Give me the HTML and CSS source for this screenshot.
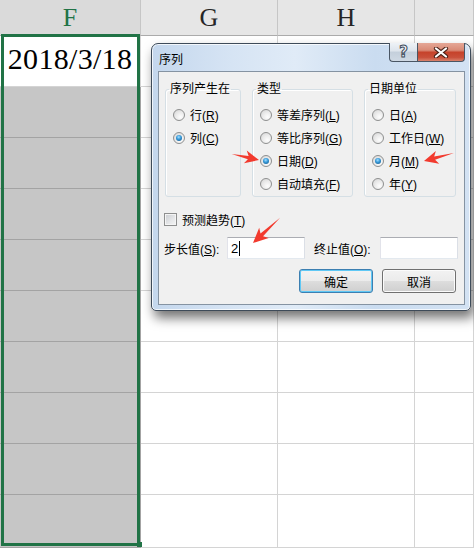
FILE: index.html
```html
<!DOCTYPE html>
<html lang="zh-CN">
<head>
<meta charset="utf-8">
<title>序列</title>
<link rel="stylesheet" href="styles.css">
</head>
<body>
<div class="sheet">
  <div class="hd hd-sel">F</div><div class="hd">G</div><div class="hd">H</div><div class="hd"></div>
  <div class="c c-date">2018/3/18</div><div class="c"></div><div class="c"></div><div class="c"></div>
  <div class="c c-g"></div><div class="c"></div><div class="c"></div><div class="c"></div>
  <div class="c c-g"></div><div class="c"></div><div class="c"></div><div class="c"></div>
  <div class="c c-g"></div><div class="c"></div><div class="c"></div><div class="c"></div>
  <div class="c c-g"></div><div class="c"></div><div class="c"></div><div class="c"></div>
  <div class="c c-g"></div><div class="c"></div><div class="c"></div><div class="c"></div>
  <div class="c c-g"></div><div class="c"></div><div class="c"></div><div class="c"></div>
  <div class="c c-g"></div><div class="c"></div><div class="c"></div><div class="c"></div>
  <div class="c c-g"></div><div class="c"></div><div class="c"></div><div class="c"></div>
  <div class="c c-g"></div><div class="c"></div><div class="c"></div><div class="c"></div>
</div>
<div class="selbox"><span class="handle"></span></div>

<div class="dlg">
  <div class="tbar">
    <span class="ttl">序列</span>
    <div class="tbtns">
      <span class="wb wb-help">?</span>
      <span class="wb wb-close"><svg width="16" height="11" viewBox="0 0 16 11"><path d="M3 1.5 L13 9.5 M13 1.5 L3 9.5" stroke="#4a2118" stroke-width="4.2" stroke-linecap="round"/><path d="M3 1.5 L13 9.5 M13 1.5 L3 9.5" stroke="#ffffff" stroke-width="2.2" stroke-linecap="round"/></svg></span>
    </div>
  </div>
  <div class="client">
    <div class="groups">
      <fieldset class="grp grp1">
        <legend>序列产生在</legend>
        <div class="opt"><span class="radio"></span><span>行(<u>R</u>)</span></div>
        <div class="opt"><span class="radio on"></span><span>列(<u>C</u>)</span></div>
      </fieldset>
      <fieldset class="grp grp2">
        <legend>类型</legend>
        <div class="opt"><span class="radio"></span><span>等差序列(<u>L</u>)</span></div>
        <div class="opt"><span class="radio"></span><span>等比序列(<u>G</u>)</span></div>
        <div class="opt"><span class="radio on"></span><span>日期(<u>D</u>)</span></div>
        <div class="opt"><span class="radio"></span><span>自动填充(<u>F</u>)</span></div>
      </fieldset>
      <fieldset class="grp grp3">
        <legend>日期单位</legend>
        <div class="opt"><span class="radio"></span><span>日(<u>A</u>)</span></div>
        <div class="opt"><span class="radio"></span><span>工作日(<u>W</u>)</span></div>
        <div class="opt"><span class="radio on"></span><span>月(<u>M</u>)</span></div>
        <div class="opt"><span class="radio"></span><span>年(<u>Y</u>)</span></div>
      </fieldset>
    </div>
    <div class="trend"><span class="chk"></span><span>预测趋势(<u>T</u>)</span></div>
    <div class="step">
      <span class="lbl lbl1">步长值(<u>S</u>):</span>
      <div class="tb"><span>2</span><span class="caret"></span></div>
      <span class="lbl lbl2">终止值(<u>O</u>):</span>
      <div class="tb"></div>
    </div>
    <div class="btns">
      <div class="btn btn-def">确定</div>
      <div class="btn">取消</div>
    </div>
  </div>
</div>

<svg class="arrows" width="474" height="548" viewBox="0 0 474 548">
  <path class="arr" d="M-28 0 L-11 -1.7 L-14 -6.5 L0 0 L-14 6.5 L-11 1.7 Z" transform="translate(259 160) rotate(12.5)"/>
  <path class="arr" d="M-31 0 L-11 -1.7 L-14 -6.5 L0 0 L-14 6.5 L-11 1.7 Z" transform="translate(424 161) rotate(165)"/>
  <path class="arr" d="M-37 0 L-12 -1.9 L-15 -7 L0 0 L-15 7 L-12 1.9 Z" transform="translate(253 243) rotate(137)"/>
</svg>
</body>
</html>
```

FILE: styles.css
```css
html, body {
  margin: 0;
  padding: 0;
}
body {
  width: 474px;
  height: 548px;
  overflow: hidden;
  background: #ffffff;
  position: relative;
  font-family: "Liberation Sans", "Noto Sans CJK SC", sans-serif;
}

/* ---------- spreadsheet ---------- */
.sheet {
  display: grid;
  grid-template-columns: 141px 137px 137px 59px;
  grid-template-rows: 36px repeat(9, 51px) 53px;
}
.hd {
  box-sizing: border-box;
  background: #e6e6e6;
  border-right: 1px solid #c6c6c6;
  border-bottom: 1px solid #ababab;
  display: flex;
  align-items: center;
  justify-content: center;
  font-family: "Liberation Serif", serif;
  font-size: 26px;
  color: #262626;
  padding-top: 1px;
}
.hd-sel {
  background: #dadada;
  color: #217346;
}
.c {
  box-sizing: border-box;
  border-right: 1px solid #d4d4d4;
  border-bottom: 1px solid #d4d4d4;
  background: #ffffff;
}
.c-g {
  background: #c6c6c6;
  border-bottom-color: #a3a3a3;
  border-right-color: #a3a3a3;
}
.c-date {
  display: flex;
  align-items: flex-end;
  justify-content: center;
  font-family: "Liberation Serif", serif;
  font-size: 30px;
  letter-spacing: 0.3px;
  line-height: 1;
  padding-bottom: 12px;
  color: #000;
}
.selbox {
  position: absolute;
  left: 1px;
  top: 34px;
  width: 139px;
  height: 512px;
  box-sizing: border-box;
  border: 3px solid #217346;
}
.handle {
  position: absolute;
  right: -5px;
  bottom: -4px;
  width: 5px;
  height: 5px;
  background: #217346;
}

/* ---------- dialog ---------- */
.dlg {
  position: absolute;
  left: 151px;
  top: 43px;
  width: 320px;
  height: 268px;
  box-sizing: border-box;
  border: 1px solid #3e4b59;
  border-radius: 7px 7px 5px 5px;
  background: linear-gradient(90deg, #c4d7ed 0%, #d6e4f4 25%, #e0ebf7 45%, #cadcf0 70%, #d3e2f3 100%);
  box-shadow: 3px 7px 12px rgba(0, 0, 0, 0.55), inset 0 0 0 1px rgba(255, 255, 255, 0.75);
  padding: 0 5px 5px 6px;
  display: flex;
  flex-direction: column;
  font-size: 12px;
  color: #000;
}
.tbar {
  height: 27px;
  display: flex;
  align-items: center;
}
.ttl {
  flex: 1;
  font-size: 12px;
  padding-left: 1px;
  padding-top: 1px;
}
.tbtns {
  align-self: flex-start;
  display: flex;
  margin-top: -1px;
}
.wb {
  box-sizing: border-box;
  height: 19px;
  display: flex;
  align-items: center;
  justify-content: center;
  border: 1px solid #4a5664;
  border-top: none;
}
.wb-help {
  width: 28px;
  border-right: none;
  border-radius: 0 0 0 4px;
  background: linear-gradient(#eef2f6 0%, #dde4ec 45%, #c4cfdb 50%, #cfd9e4 100%);
  font-family: "DejaVu Sans", sans-serif;
  font-weight: bold;
  font-size: 15px;
  color: #f4f6f8;
  -webkit-text-stroke: 1px #3f4c5b;
  line-height: 1;
}
.wb-close {
  width: 48px;
  border-radius: 0 0 4px 0;
  background: linear-gradient(#e5a796 0%, #d98a76 40%, #c6432b 52%, #c9503a 80%, #d9826c 100%);
}

.client {
  flex: 1;
  border: 1px solid #8593a2;
  background: #f0f0f0;
  padding: 10px 0 0 0;
  display: flex;
  flex-direction: column;
}
.groups {
  margin-left: 6px;
  display: flex;
  gap: 11px;
  align-items: stretch;
}
.grp {
  margin: 0;
  min-width: 0;
  box-sizing: border-box;
  padding: 6px 0 1px 7px;
  border: 1px solid #d5dfe5;
  border-radius: 3px;
  box-shadow: inset 1px 1px 0 #ffffff;
}
.grp1 { width: 76px; }
.grp2 { width: 101px; }
.grp3 { width: 92px; }
.grp legend {
  padding: 0 1px;
  margin-left: -4px;
  line-height: 15px;
  font-size: 12px;
}
.opt {
  height: 23px;
  display: flex;
  align-items: center;
  gap: 5px;
  white-space: nowrap;
  font-size: 12px;
}
.opt u, .trend u, .lbl u { text-underline-offset: 1px; }
.radio {
  position: relative;
  flex: none;
  box-sizing: border-box;
  width: 12px;
  height: 12px;
  border-radius: 50%;
  border: 1px solid #8e8f8f;
  background: radial-gradient(circle at 65% 70%, #fdfdfd 0%, #ececec 45%, #d2d2d2 100%);
}
.radio.on::after {
  content: "";
  position: absolute;
  left: 2px;
  top: 2px;
  width: 6px;
  height: 6px;
  border-radius: 50%;
  background: radial-gradient(circle at 45% 35%, #a8e0ff 0%, #3a9ddc 40%, #0c4d80 100%);
}

.trend {
  margin-top: 14px;
  padding-left: 5px;
  height: 16px;
  display: flex;
  align-items: center;
  gap: 5px;
  font-size: 12px;
}
.chk {
  flex: none;
  box-sizing: border-box;
  width: 13px;
  height: 13px;
  border: 1px solid #8e8f8f;
  background: linear-gradient(135deg, #c9ccd0 0%, #e6e7e9 60%, #f4f4f4 100%);
  box-shadow: inset 0 0 0 1px #f4f4f4;
}

.step {
  margin-top: 10px;
  padding-left: 5px;
  height: 22px;
  display: flex;
  align-items: center;
  font-size: 12px;
}
.lbl1 { width: 63px; }
.lbl2 { width: 66px; margin-left: 9px; }
.lbl { white-space: nowrap; }
.tb {
  box-sizing: border-box;
  width: 78px;
  height: 22px;
  background: #ffffff;
  border: 1px solid #abadb3;
  border-color: #abadb3 #dbdfe6 #e3e9ef #e2e3ea;
  padding-left: 3px;
  display: flex;
  align-items: center;
  font-size: 13px;
}
.caret {
  width: 1px;
  height: 15px;
  background: #000;
  margin-left: 1px;
}

.btns {
  margin-top: 10px;
  padding-right: 8px;
  display: flex;
  justify-content: flex-end;
  gap: 9px;
}
.btn {
  box-sizing: border-box;
  width: 74px;
  height: 24px;
  border: 1px solid #707070;
  border-radius: 3px;
  background: linear-gradient(#f2f2f2 0%, #ebebeb 50%, #dddddd 51%, #cfcfcf 100%);
  box-shadow: inset 0 0 0 1px #fbfbfb;
  display: flex;
  align-items: center;
  justify-content: center;
  font-size: 12px;
}
.btn-def {
  border-color: #3c7fb1;
  box-shadow: inset 0 0 0 1px #5fc8f5;
}

/* ---------- annotation arrows ---------- */
.arrows {
  position: absolute;
  left: 0;
  top: 0;
  pointer-events: none;
}
.arr {
  fill: #f23a2e;
}
```
